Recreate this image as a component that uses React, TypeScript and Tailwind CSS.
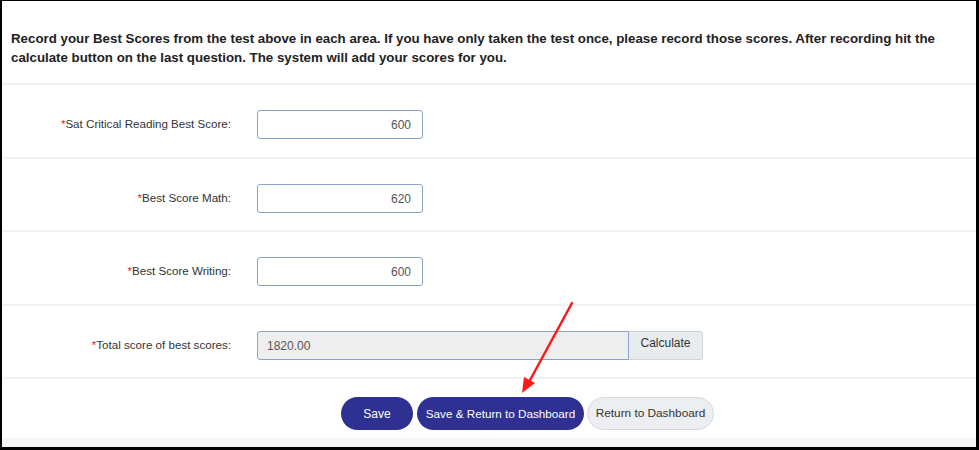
const font = { fontFamily: '"Liberation Sans", Arial, sans-serif' }

type Field = { label: string; value: string; h: string }

const fields: Field[] = [
  { label: 'Sat Critical Reading Best Score:', value: '600', h: 'h-[74px]' },
  { label: 'Best Score Math:', value: '620', h: 'h-[73px]' },
  { label: 'Best Score Writing:', value: '600', h: 'h-[74px]' },
]

function Label({ text }: { text: string }) {
  return (
    <div className="w-[229px] shrink-0 pb-[2px] text-right text-[11.6px] text-[#333]">
      <span className="text-[#e0262b]">*</span>
      {text}
    </div>
  )
}

export default function App() {
  return (
    <div
      className="relative flex h-[450px] w-[979px] flex-col overflow-hidden border-t border-l-2 border-r-[3px] border-b-[3px] border-black bg-white"
      style={font}
    >
      {/* Intro */}
      <div className="h-[82px] shrink-0 pl-[9px] pr-2 pt-[28px] text-[13.3px] font-bold leading-[19px] text-[#222]">
        Record your Best Scores from the test above in each area. If you have only taken the test once, please record those scores. After recording hit the calculate button on the last question. The system will add your scores for you.
      </div>

      {fields.map((f) => (
        <div
          key={f.label}
          className={`flex ${f.h} shrink-0 items-start border-t-2 border-[#f2f2f2] pt-[25px]`}
        >
          <div className="flex h-[29px] items-center">
            <Label text={f.label} />
          </div>
          <input
            readOnly
            value={f.value}
            className="ml-[26px] h-[29px] w-[166px] rounded-[3px] border border-[#8aa5c7] bg-white px-[11px] text-right text-[12px] text-[#555] outline-none"
          />
        </div>
      ))}

      {/* Total */}
      <div className="flex h-[73px] shrink-0 items-start border-t-2 border-[#f2f2f2] pt-[25px]">
        <div className="flex h-[29px] items-center">
          <Label text="Total score of best scores:" />
        </div>
        <div className="ml-[26px] flex h-[29px]">
          <input
            readOnly
            value="1820.00"
            className="h-[29px] w-[372px] rounded-l-[3px] border border-[#8aa5c7] bg-[#eeeeee] px-[9px] text-[12px] text-[#555] outline-none"
          />
          <button className="h-[29px] w-[74px] rounded-r-[3px] border border-l-0 border-[#cfd4da] bg-[#e9ecef] pb-[6px] text-[12px] text-[#333]">
            Calculate
          </button>
        </div>
      </div>

      {/* Actions */}
      <div className="flex shrink-0 items-start gap-[4px] border-t-2 border-[#f2f2f2] pl-[339px] pt-[18px] pb-[8px]">
        <button className="h-[33px] w-[72px] rounded-full bg-[#2e3192] text-[12px] font-medium text-white">
          Save
        </button>
        <button className="h-[33px] w-[167px] rounded-full bg-[#2e3192] text-[11.7px] text-white">
          Save &amp; Return to Dashboard
        </button>
        <button className="ml-[-1px] h-[33px] w-[127px] rounded-full border border-[#d5d8dc] bg-[#eceef1] text-[11.8px] text-[#333]">
          Return to Dashboard
        </button>
      </div>

      <div className="flex-1 bg-[#f5f5f5]" />

      {/* Annotation arrow */}
      <svg className="pointer-events-none absolute left-0 top-0" width="979" height="450">
        <line x1="570" y1="302" x2="527" y2="381" stroke="#ff1a1a" strokeWidth="2.5" strokeLinecap="round" />
        <polygon points="520,392 522,376 533,382" fill="#ff1a1a" />
      </svg>
    </div>
  )
}
